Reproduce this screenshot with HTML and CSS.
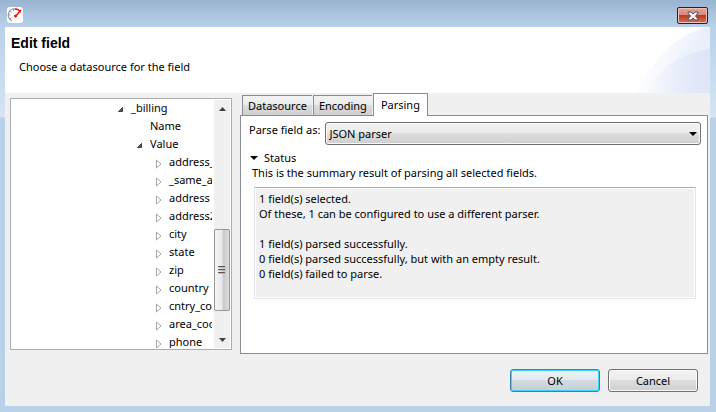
FILE: index.html
```html
<!DOCTYPE html>
<html lang="en">
<head>
    <meta charset="UTF-8">
    <meta name="viewport" content="width=device-width, initial-scale=1.0">
    <title>Edit field</title>
    <link rel="stylesheet" href="styles.css">
</head>
<body>
    <div class="window">
        <div class="titlebar">
            <svg class="app-icon" width="16" height="16" viewBox="0 0 16 16" aria-hidden="true">
                <rect width="16" height="16" rx="3" fill="#fff"/>
                <path d="M5 13.5A6 6 0 0 1 8 2" fill="none" stroke="#999" stroke-width="1.3"/>
                <path d="M1.500 8h2M3 4l1.500 1.500M3 12l1.500-1.500M6.500 2v2" stroke="#999"/>
                <path d="M8 2a6 6 0 0 1 5.500 3.500M11.500 3l2 1" fill="none" stroke="#f01010" stroke-width="1.3"/>
                <path d="M14 3L8.500 9.500" stroke="#f01010" stroke-width="1.5"/>
                <circle cx="8.500" cy="9" r="1.500" fill="#f01010"/>
            </svg>
            <button type="button" class="close" aria-label="Close">
                <svg width="12" height="10" viewBox="0 0 12 10">
                    <path d="M1 1h3l2 2 2-2h3v1L8.500 5 11 8v1H8L6 7 4 9H1V8l2.500-3L1 2z" fill="#f4f4f4" stroke="#51505c"/>
                </svg>
            </button>
        </div>

        <div class="content">
            <header class="header">
                <h1>Edit field</h1>
                <p>Choose a datasource for the field</p>
                <svg class="swoosh" width="74" height="66" viewBox="0 0 74 66" aria-hidden="true">
                    <defs>
                        <linearGradient id="fade">
                            <stop offset="0" stop-color="#e4eaf9" stop-opacity=".1"/>
                            <stop offset="1" stop-color="#e4eaf9" stop-opacity=".7"/>
                        </linearGradient>
                        <linearGradient id="fadeInner">
                            <stop offset="0" stop-color="#d9e1f6" stop-opacity="0"/>
                            <stop offset="1" stop-color="#d9e1f6" stop-opacity=".7"/>
                        </linearGradient>
                    </defs>
                    <path d="M1 66C14 34 40 8 70 0h4v66z" fill="url(#fade)"/>
                    <path d="M28 66C32 40 50 10 74 0v66z" fill="url(#fade)" opacity=".5"/>
                    <path d="M8 66C24 40 46 26 74 22v44z" fill="url(#fadeInner)"/>
                </svg>
            </header>

            <main class="panes">
                <div class="tree-box">
                    <ul class="tree" role="tree" aria-label="Fields">
                        <li class="level-1" role="treeitem" aria-expanded="true"><svg class="arrow" viewBox="0 0 8 8"><path d="M5.500 1.500v4H1.500z" fill="#595959" stroke="#404040"/></svg>_billing</li>
                        <li class="level-2" role="treeitem">Name</li>
                        <li class="level-2" role="treeitem" aria-expanded="true"><svg class="arrow" viewBox="0 0 8 8"><path d="M5.500 1.500v4H1.500z" fill="#595959" stroke="#404040"/></svg>Value</li>
                        <li class="level-3" role="treeitem" aria-expanded="false"><svg class="arrow" viewBox="0 0 8 8"><path d="M1.500 0v8L6 4z" fill="#fff" stroke="#a6a6a6"/></svg>address_type</li>
                        <li class="level-3" role="treeitem" aria-expanded="false"><svg class="arrow" viewBox="0 0 8 8"><path d="M1.500 0v8L6 4z" fill="#fff" stroke="#a6a6a6"/></svg>_same_as</li>
                        <li class="level-3" role="treeitem" aria-expanded="false"><svg class="arrow" viewBox="0 0 8 8"><path d="M1.500 0v8L6 4z" fill="#fff" stroke="#a6a6a6"/></svg>address</li>
                        <li class="level-3" role="treeitem" aria-expanded="false"><svg class="arrow" viewBox="0 0 8 8"><path d="M1.500 0v8L6 4z" fill="#fff" stroke="#a6a6a6"/></svg>address2</li>
                        <li class="level-3" role="treeitem" aria-expanded="false"><svg class="arrow" viewBox="0 0 8 8"><path d="M1.500 0v8L6 4z" fill="#fff" stroke="#a6a6a6"/></svg>city</li>
                        <li class="level-3" role="treeitem" aria-expanded="false"><svg class="arrow" viewBox="0 0 8 8"><path d="M1.500 0v8L6 4z" fill="#fff" stroke="#a6a6a6"/></svg>state</li>
                        <li class="level-3" role="treeitem" aria-expanded="false"><svg class="arrow" viewBox="0 0 8 8"><path d="M1.500 0v8L6 4z" fill="#fff" stroke="#a6a6a6"/></svg>zip</li>
                        <li class="level-3" role="treeitem" aria-expanded="false"><svg class="arrow" viewBox="0 0 8 8"><path d="M1.500 0v8L6 4z" fill="#fff" stroke="#a6a6a6"/></svg>country</li>
                        <li class="level-3" role="treeitem" aria-expanded="false"><svg class="arrow" viewBox="0 0 8 8"><path d="M1.500 0v8L6 4z" fill="#fff" stroke="#a6a6a6"/></svg>cntry_code</li>
                        <li class="level-3" role="treeitem" aria-expanded="false"><svg class="arrow" viewBox="0 0 8 8"><path d="M1.500 0v8L6 4z" fill="#fff" stroke="#a6a6a6"/></svg>area_code</li>
                        <li class="level-3" role="treeitem" aria-expanded="false"><svg class="arrow" viewBox="0 0 8 8"><path d="M1.500 0v8L6 4z" fill="#fff" stroke="#a6a6a6"/></svg>phone</li>
                    </ul>
                    <div class="scrollbar">
                        <button type="button" class="scroll-button" aria-label="Scroll up"><svg width="7" height="4" viewBox="0 0 7 4"><path d="M0 4L3.500 0 7 4z" fill="#404040"/></svg></button>
                        <div class="track">
                            <div class="thumb"><svg width="8" height="9" viewBox="0 0 8 9"><path d="M0 .5h7M0 3.500h7M0 6.500h7" stroke="#5a5a5a"/><path d="M1 1.500h7M1 4.500h7M1 7.500h7" stroke="#b8b8b8"/></svg></div>
                        </div>
                        <button type="button" class="scroll-button" aria-label="Scroll down"><svg width="7" height="4" viewBox="0 0 7 4"><path d="M0 0h7L3.500 4z" fill="#404040"/></svg></button>
                    </div>
                </div>

                <div class="tabs">
                    <div class="tab-list" role="tablist">
                        <button type="button" class="tab" role="tab" aria-selected="false">Datasource</button>
                        <button type="button" class="tab" role="tab" aria-selected="false">Encoding</button>
                        <button type="button" class="tab active" role="tab" aria-selected="true">Parsing</button>
                    </div>
                    <div class="tab-panel" role="tabpanel">
                        <div class="parser-row">
                            <label for="parser">Parse field as:</label>
                            <div class="select-wrap">
                                <select id="parser">
                                    <option>JSON parser</option>
                                </select>
                                <svg class="select-arrow" width="8" height="4" viewBox="0 0 8 4" aria-hidden="true"><path d="M0 0h8L4 4z"/></svg>
                            </div>
                        </div>
                        <details class="status" open>
                            <summary><svg width="8" height="4" viewBox="0 0 8 4" aria-hidden="true"><path d="M0 0h8L4 4z"/></svg>Status</summary>
                            <label for="summary">This is the summary result of parsing all selected fields.</label>
                            <textarea id="summary" readonly>1 field(s) selected.
Of these, 1 can be configured to use a different parser.

1 field(s) parsed successfully.
0 field(s) parsed successfully, but with an empty result.
0 field(s) failed to parse.</textarea>
                        </details>
                    </div>
                </div>
            </main>

            <footer class="footer">
                <button type="submit" class="button default">OK</button>
                <button type="button" class="button">Cancel</button>
            </footer>
        </div>
    </div>
</body>
</html>
```
FILE: styles.css
```css
:root {
    --face: #f0f0f0;
    --frame: #bad1ea;
    --border: #898c95;
    --button-border: #707070;
}

* {
    box-sizing: border-box;
}

body {
    margin: 0;
    font-family: 'Segoe UI', 'Noto Sans', sans-serif;
    font-size: 11px;
    line-height: 15px;
    color: #000;
}

button, select, textarea {
    font: inherit;
    color: inherit;
}

.window {
    display: flex;
    flex-direction: column;
    min-height: 100vh;
    padding: 0 6px 6px 5px;
    background: linear-gradient(#99b4d1 0, #b9d1ea 27px, #d6e4f4 117px, var(--frame) 118px);
}

.titlebar {
    display: flex;
    justify-content: space-between;
    height: 27px;
    padding: 7px 2px 0;
}

.close {
    display: flex;
    align-items: center;
    justify-content: center;
    width: 31px;
    height: 17px;
    padding: 0;
    border: 1px solid #43141f;
    border-radius: 2px;
    background: linear-gradient(#e5a399 0, #d88a7c 45%, #b83c22 50%, #d07460 100%);
    box-shadow: inset 0 0 0 1px #f0c2b8;
}

.content {
    display: flex;
    flex: 1;
    flex-direction: column;
    background: var(--face);
}

.header {
    position: relative;
    height: 66px;
    padding: 8px 6px;
    background: #fff;
}

.header h1 {
    margin: 0;
    font-family: 'Liberation Sans', Arial, sans-serif;
    font-size: 14px;
    line-height: 16px;
}

.header p {
    margin: 8px;
}

.swoosh {
    position: absolute;
    top: 0;
    right: 0;
}

.panes {
    display: grid;
    flex: 1;
    grid-template-columns: 37fr 78fr;
    gap: 8px;
    padding: 0 2px 0 5px;
}

/* Field tree */
.tree-box {
    display: flex;
    min-width: 0;
    margin: 5px 0 4px;
    padding: 1px;
    border: 1px solid #abadb3;
    background: #fff;
}

.tree {
    flex: 1;
    height: 248px;
    margin: 0 2px 0 0;
    padding: 0;
    overflow: hidden;
    list-style: none;
    white-space: nowrap;
}

.tree li {
    display: flex;
    align-items: center;
    height: 18px;
    line-height: 16px;
    padding-bottom: 2px;
}

.level-1 {
    padding-left: 119px;
}

.level-2 {
    padding-left: 138px;
}

.level-3 {
    padding-left: 157px;
}

.arrow {
    flex: none;
    width: 8px;
    height: 8px;
    margin: 4px 6px 0 -14px;
    overflow: visible;
}

.scrollbar {
    display: flex;
    flex-direction: column;
    width: 16px;
    background: var(--face);
}

.scroll-button {
    display: flex;
    align-items: center;
    justify-content: center;
    height: 17px;
    padding: 0;
    border: 0;
    background: none;
}

.track {
    display: flex;
    flex: 1;
    flex-direction: column;
    justify-content: flex-end;
    padding-bottom: 20px;
}

.thumb {
    display: flex;
    align-items: center;
    justify-content: center;
    height: 82px;
    border: 1px solid #979797;
    border-radius: 2px;
    background: linear-gradient(90deg, #f5f5f5, #e9e9eb 50%, #c9c9cd 60%, #dcdcde);
}

.thumb svg {
    display: block;
}

/* Tabs */
.tabs {
    display: flex;
    min-width: 0;
    flex-direction: column;
}

.tab-list {
    display: flex;
    align-items: flex-end;
    gap: 1px;
    height: 22px;
    padding-left: 2px;
}

.tab {
    height: 20px;
    padding: 0 5px;
    border: 1px solid var(--border);
    border-right-width: 0;
    border-bottom: 0;
    background: linear-gradient(#f2f2f2, #ebebeb 50%, #ddd 50%, #cfcfcf);
}

.tab.active {
    z-index: 1;
    height: 23px;
    margin-bottom: -1px;
    padding: 0 7px 2px;
    border-right-width: 1px;
    background: #fff;
}

.tab-panel {
    flex: 1;
    padding: 6px 6px 6px 8px;
    border: 1px solid var(--border);
    background: #fff;
}

.parser-row {
    display: flex;
    gap: 5px;
}

.select-wrap {
    position: relative;
    flex: 1;
}

.select-wrap select {
    display: block;
    width: 100%;
    height: 23px;
    padding: 0 3px;
    border: 1px solid var(--button-border);
    border-radius: 3px;
    appearance: none;
    background: linear-gradient(#f2f2f2, #ebebeb 50%, #ddd 50%, #cfcfcf);
    box-shadow: inset 0 0 0 1px #fafafa;
}

.select-arrow {
    position: absolute;
    top: 10px;
    right: 4px;
}

.status {
    margin-top: 5px;
    padding: 0 5px 0 3px;
}

.status summary {
    display: flex;
    align-items: center;
    gap: 6px;
    margin-left: -2px;
    list-style: none;
}

.status textarea {
    display: block;
    width: calc(100% - 2px);
    height: 112px;
    margin: 7px 0 0 2px;
    padding: 3px 4px;
    border: 1px solid #e2e3ea;
    border-top-color: #abadb3;
    border-radius: 1px;
    outline: 0;
    background: var(--face);
    box-shadow: inset 0 0 0 1px #fff;
    resize: none;
}

/* Dialog buttons */
.footer {
    display: flex;
    justify-content: flex-end;
    gap: 8px;
    padding: 15px 12px 14px;
}

.button {
    width: 90px;
    height: 23px;
    padding: 0;
    border: 1px solid var(--button-border);
    border-radius: 3px;
    background: linear-gradient(#f2f2f2, #ebebeb 50%, #ddd 50%, #cfcfcf);
    box-shadow: inset 0 0 0 1px #fafafa;
}

.button.default {
    border-color: #3c7fb1;
    background: linear-gradient(#edf2f4, #e3eaed 50%, #d1dbe0 50%, #c4d0d6);
    box-shadow: inset 0 0 0 1px #45d0f5;
}
```
